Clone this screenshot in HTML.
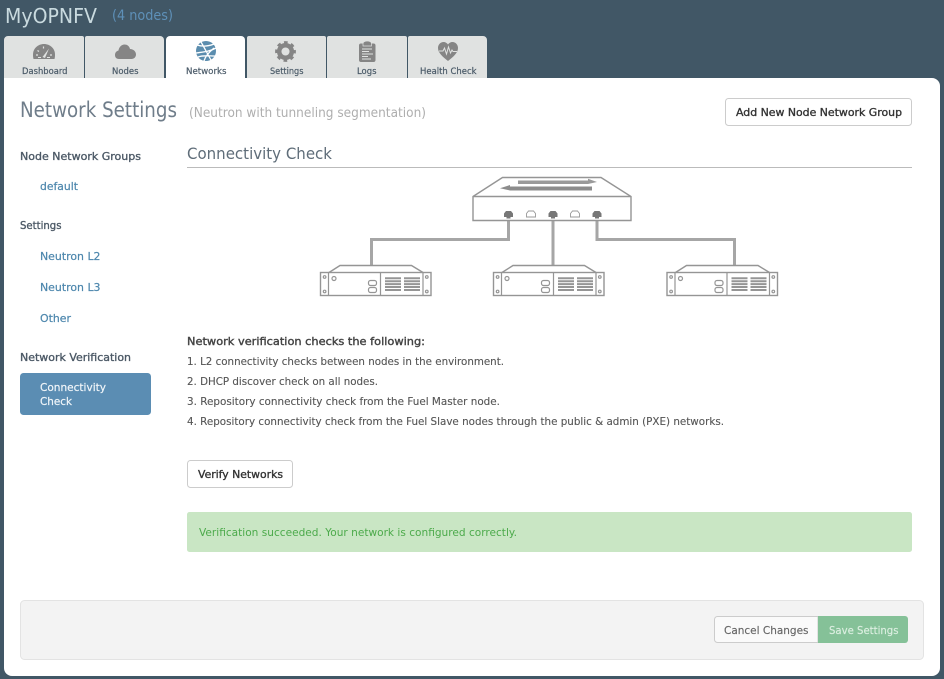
<!DOCTYPE html>
<html lang="en"><head><meta charset="utf-8"><title>Network Settings</title>
<style>
html,body{margin:0;padding:0;width:944px;height:679px;overflow:hidden;background:#415766}
svg{display:block;position:absolute;left:0;top:0}
text{font-family:"DejaVu Sans","Liberation Sans",sans-serif;white-space:pre}
.tab{font-size:9px;fill:#4a5a68;stroke:#4a5a68;stroke-width:.2}
.b{font-size:11px;fill:#555;stroke:#555;stroke-width:.12}
.n{font-size:11px;fill:#4d87ad;stroke:#4d87ad;stroke-width:.2}
.h{font-size:11px;fill:#4c5966;stroke:#4c5966;stroke-width:.35}
</style></head><body>
<svg width="944" height="679" viewBox="0 0 944 679" xmlns="http://www.w3.org/2000/svg">
<defs>
<g id="srv" fill="none" stroke="#959595" stroke-width="1.200">
<path d="M329 272.500 340 265.500H411.500L423 272.500" stroke-width="1.400"/>
<rect x="320.500" y="272.500" width="110.500" height="23" fill="#fff" stroke-width="1.400"/>
<path d="M328.500 272.500V295.500M423 272.500V295.500M380.500 272.500V295.500"/>
<circle cx="324.600" cy="277" r="1.300"/><circle cx="324.600" cy="291.500" r="1.300"/>
<circle cx="426.800" cy="277" r="1.300"/><circle cx="426.800" cy="291.500" r="1.300"/>
<circle cx="334" cy="278.500" r="2"/>
<rect x="368.500" y="280.500" width="8" height="5" rx="2"/><rect x="368.500" y="287.500" width="8" height="5" rx="2"/>
<path d="M385 278.300H401M385 281.200H401M385 284.100H401M385 287H401M385 290H401M404 278.300H420M404 281.200H420M404 284.100H420M404 287H420M404 290H420" stroke-width="2"/>
</g>
<path id="pf" d="M-4.500 3V-.5L-2.500-3H2.500L4.500-.5V3H2V4.500H-2V3Z" fill="#777"/>
<path id="po" d="M-4.500 3V-.5L-2.500-3H2.500L4.500-.5V3Z" fill="#fff" stroke="#999" stroke-width=".9"/>
</defs>

<!-- header -->
<text x="5" y="23" font-size="20" fill="#c9dadf" textLength="92" lengthAdjust="spacingAndGlyphs">MyOPNFV</text>
<text x="112" y="20" font-size="14" fill="#5e90b8" textLength="61" lengthAdjust="spacingAndGlyphs">(4 nodes)</text>

<!-- tabs -->
<g fill="#e0e2e1">
<path d="M4 78V40a4 4 0 0 1 4-4H82a2 2 0 0 1 2 2V78Z"/>
<path d="M85 78V38a2 2 0 0 1 2-2H160a4 4 0 0 1 4 4V78Z"/>
<path d="M247 78V38a2 2 0 0 1 2-2H324a2 2 0 0 1 2 2V78Z"/>
<path d="M327 78V38a2 2 0 0 1 2-2H405a2 2 0 0 1 2 2V78Z"/>
<path d="M408 78V38a2 2 0 0 1 2-2H483a4 4 0 0 1 4 4V78Z"/>
</g>
<path d="M166 78V40a4 4 0 0 1 4-4H241a4 4 0 0 1 4 4V78Z" fill="#fff"/>

<!-- panel -->
<path d="M4 78H932a8 8 0 0 1 8 8V668a8 8 0 0 1-8 8H12a8 8 0 0 1-8-8Z" fill="#fff"/>

<!-- tab icons -->
<path d="M33.500 59C33 57 33 56 33 54.500 33 48.500 38 44 44 44S55 48.500 55 54.500C55 56 55 57 54.500 59Z" fill="#858585"/>
<path d="M42.500 57 49 48.500 45 58Z" fill="#e0e2e1"/>
<path d="M36 55H38M37.500 50.500 39 51.500M43.500 46.500V48.500M50 55H52" stroke="#e0e2e1" stroke-width="1.200"/>
<path d="M38 57.500H41M47 57.500H50" stroke="#e0e2e1" stroke-width="1"/>
<path d="M119 59C116 59 115 57 115 55 115 52.500 116.500 51 118.500 50.500 119 47 121.500 44.500 124.500 44.500 127.500 44.500 129.500 46.500 130 49 133.500 49 136 51.500 136 54.500 136 57 134 59 131.500 59Z" fill="#858585"/>

<circle cx="206" cy="51" r="10" fill="#5b8dae"/>
<path d="M197 45C203 47 209 46 214 44M196 53C202 52 209 52 216 48M201 42C204 47 207 53 211 60M204 61C205 57 208 53 214 48M198 57C203 55 209 56 215 56" fill="none" stroke="#fff" stroke-width="1.300"/>

<circle cx="285.500" cy="51.500" r="6.300" fill="none" stroke="#858585" stroke-width="4.500"/>
<circle cx="285.500" cy="51.500" r="9.200" fill="none" stroke="#858585" stroke-width="2.400" stroke-dasharray="3.700 3.525" stroke-dashoffset="1.800"/>

<path d="M360.500 43.500H373.500A2 2 0 0 1 375.500 45.500V60A2 2 0 0 1 373.500 62H361A2 2 0 0 1 359 60V45.500A2 2 0 0 1 360.500 43.500Z" fill="#858585"/>
<path d="M363 43.500C363 42 365 41 367.300 41S371.500 42 371.500 43.500V46H363Z" fill="#858585" stroke="#e0e2e1" stroke-width=".7"/>
<path d="M362 49H372M362 51.500H369M362 54H373M362 56.500H368M362 59H371" stroke="#e0e2e1" stroke-width="1"/>

<path d="M448 61C443 57 438 53 438 48 438 44.500 440.500 42 443.500 42 445.500 42 447 43 448 44.500 449 43 450.500 42 452.500 42 455.500 42 458 44.500 458 48 458 53 453 57 448 61Z" fill="#858585"/>
<path d="M439 51H443L444.500 48 446.500 54 448.500 47 450.500 53 452 50 453 51.500H457" fill="none" stroke="#e0e2e1" stroke-width="1"/>

<!-- tab labels -->
<text class="tab" x="22" y="74" textLength="45.500" lengthAdjust="spacingAndGlyphs">Dashboard</text>
<text class="tab" x="112" y="74" textLength="26.500" lengthAdjust="spacingAndGlyphs">Nodes</text>
<text class="tab" x="186" y="74" textLength="40.500" lengthAdjust="spacingAndGlyphs">Networks</text>
<text class="tab" x="270" y="74" textLength="33.500" lengthAdjust="spacingAndGlyphs">Settings</text>
<text class="tab" x="357" y="74" textLength="19.500" lengthAdjust="spacingAndGlyphs">Logs</text>
<text class="tab" x="420" y="74" textLength="56.500" lengthAdjust="spacingAndGlyphs">Health Check</text>

<!-- title -->
<text x="20" y="117" font-size="21" fill="#6f7d8a" textLength="157" lengthAdjust="spacingAndGlyphs">Network Settings</text>
<text x="189" y="117" font-size="13" fill="#aeaeae" textLength="237" lengthAdjust="spacingAndGlyphs">(Neutron with tunneling segmentation)</text>

<!-- add button -->
<rect x="725.500" y="98.500" width="186" height="27" rx="3" fill="#fff" stroke="#ccc"/>
<text x="736" y="116" font-size="11" fill="#333" stroke="#333" stroke-width=".35" textLength="166" lengthAdjust="spacingAndGlyphs">Add New Node Network Group</text>

<!-- sidebar -->
<text class="h" x="20" y="160" textLength="121" lengthAdjust="spacingAndGlyphs">Node Network Groups</text>
<text class="n" x="40" y="190" textLength="38" lengthAdjust="spacingAndGlyphs">default</text>
<text class="h" x="20" y="229" textLength="41.500" lengthAdjust="spacingAndGlyphs">Settings</text>
<text class="n" x="40" y="260" textLength="60.500" lengthAdjust="spacingAndGlyphs">Neutron L2</text>
<text class="n" x="40" y="291" textLength="60.500" lengthAdjust="spacingAndGlyphs">Neutron L3</text>
<text class="n" x="40" y="322" textLength="31" lengthAdjust="spacingAndGlyphs">Other</text>
<text class="h" x="20" y="361" textLength="111" lengthAdjust="spacingAndGlyphs">Network Verification</text>
<rect x="20" y="373" width="131" height="42" rx="3.500" fill="#5b8db3"/>
<text x="40" y="391" font-size="11" fill="#f0f5f9" stroke="#f0f5f9" stroke-width=".2" textLength="66" lengthAdjust="spacingAndGlyphs">Connectivity</text>
<text x="40" y="405" font-size="11" fill="#f0f5f9" stroke="#f0f5f9" stroke-width=".2" textLength="32" lengthAdjust="spacingAndGlyphs">Check</text>

<!-- section heading -->
<text x="187" y="159" font-size="16" fill="#5f6d79" textLength="145" lengthAdjust="spacingAndGlyphs">Connectivity Check</text>
<rect x="187" y="167" width="725" height="1" fill="#bbb"/>

<!-- cables -->
<path d="M508.500 216V239.500H371.500V266M553 216V266M597 216V239.500H734.500V266" fill="none" stroke="#a6a6a6" stroke-width="3"/>

<!-- switch -->
<path d="M473 196.500 502.500 177.500H601L631 196.500V220.500H473Z" fill="#fff" stroke="#959595" stroke-width="1.400"/>
<path d="M473 196.500H631" stroke="#959595" stroke-width="1.400"/>
<path d="M518 180.500H588V178.800L597 182 588 184H518Z" fill="#9a9a9a"/>
<path d="M592 186.500H510V185L500 188.300 510 190.500H592Z" fill="#8c8c8c"/>
<use href="#pf" x="508.500" y="214"/><use href="#po" x="531" y="214"/><use href="#pf" x="553" y="214"/><use href="#po" x="575" y="214"/><use href="#pf" x="597" y="214"/>

<!-- servers -->
<use href="#srv"/><use href="#srv" x="173"/><use href="#srv" x="346.500"/>

<!-- description -->
<text x="187" y="345" font-size="11" fill="#444" stroke="#444" stroke-width=".4" textLength="238" lengthAdjust="spacingAndGlyphs">Network verification checks the following:</text>
<text class="b" x="187" y="365" textLength="317" lengthAdjust="spacingAndGlyphs">1. L2 connectivity checks between nodes in the environment.</text>
<text class="b" x="187" y="385" textLength="191" lengthAdjust="spacingAndGlyphs">2. DHCP discover check on all nodes.</text>
<text class="b" x="187" y="405" textLength="313" lengthAdjust="spacingAndGlyphs">3. Repository connectivity check from the Fuel Master node.</text>
<text class="b" x="187" y="425" textLength="537" lengthAdjust="spacingAndGlyphs">4. Repository connectivity check from the Fuel Slave nodes through the public &amp; admin (PXE) networks.</text>

<!-- verify -->
<rect x="187.500" y="460.500" width="105" height="27" rx="3" fill="#fff" stroke="#ccc"/>
<text x="198" y="478" font-size="11" fill="#333" stroke="#333" stroke-width=".35" textLength="85" lengthAdjust="spacingAndGlyphs">Verify Networks</text>

<!-- alert -->
<rect x="187" y="512" width="725" height="40" rx="2.500" fill="#c9e6c4"/>
<text x="199" y="536" font-size="11" fill="#4caa4b" textLength="318" lengthAdjust="spacingAndGlyphs">Verification succeeded. Your network is configured correctly.</text>

<!-- footer -->
<rect x="20.500" y="600.500" width="903" height="59" rx="4" fill="#f3f3f3" stroke="#e3e3e3"/>
<path d="M818 616.500H717.500A3 3 0 0 0 714.500 619.500V639.500A3 3 0 0 0 717.500 642.500H818Z" fill="#fafafa" stroke="#ccc"/>
<path d="M818 616H905A3 3 0 0 1 908 619V640A3 3 0 0 1 905 643H818Z" fill="#85c198"/>
<text x="724" y="634" font-size="11" fill="#666" stroke="#666" stroke-width=".15" textLength="84.500" lengthAdjust="spacingAndGlyphs">Cancel Changes</text>
<text x="829" y="634" font-size="11" fill="#dcefe1" stroke="#dcefe1" stroke-width=".15" textLength="69.500" lengthAdjust="spacingAndGlyphs">Save Settings</text>
</svg>
</body></html>
